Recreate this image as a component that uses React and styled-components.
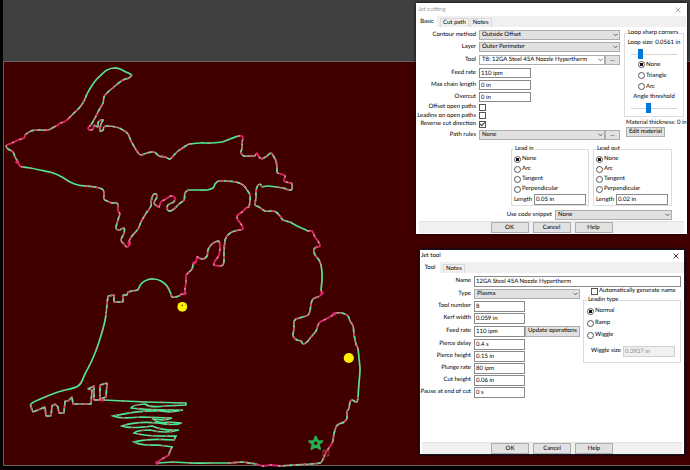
import React, { useId } from "react";
import styled, { createGlobalStyle } from "styled-components";

const GlobalStyle = createGlobalStyle`
  *, *::before, *::after { box-sizing: border-box; }
  body { margin: 0; background: #000; }
  body, button, input, select {
    font-family: Lato, "Liberation Sans", sans-serif;
    font-size: 6px;
    line-height: 8px;
    color: #000;
    text-rendering: geometricPrecision;
  }
`;

/* ---------- workspace ---------- */

const Workspace = styled.main`
  position: relative;
  display: flex;
  flex-direction: column;
  min-height: 100vh;
  overflow: hidden;
  background: #000;
`;

const Margin = styled.div`
  height: 61px;
  margin-left: 3px;
  background: #404040;
`;

const Sheet = styled.section`
  display: flex;
  flex: 1;
  margin: 0 0 4px 3px;
  background: #400000;
  border: solid #6b5f5f;
  border-width: 1px 0 1px 1px;
`;

const Drawing = styled.svg`
  flex: 1;
  min-width: 0;
  overflow: visible;
`;

/* ---------- windows ---------- */

const Dialog = styled.section`
  position: absolute;
  top: ${(p) => p.$top}px;
  right: ${(p) => p.$right}px;
  width: ${(p) => p.$width}px;
  max-width: 100vw;
  display: flex;
  flex-direction: column;
  background: #fff;
  border: 1px solid ${(p) => (p.$active ? "#14142c" : "#fff")};
  box-shadow: 0 0 3px #000;
`;

const TitleBar = styled.header`
  display: flex;
  align-items: center;
  justify-content: space-between;
  height: 12px;
  padding: 0 5px 0 1px;
  color: ${(p) => (p.$active ? "#000" : "#999")};
`;

const Title = styled.h2`
  margin: 0;
  font-size: 6px;
  line-height: 8px;
  font-weight: 400;
`;

const CloseButton = styled.button`
  display: flex;
  padding: 0;
  border: 0;
  background: none;
  color: inherit;
`;

const TabBar = styled.div`
  display: flex;
  align-items: flex-end;
  gap: 1px;
  height: 11px;
  background: #f0f0f0;
`;

const Tab = styled.button`
  height: ${(p) => (p.$active ? 11 : 9)}px;
  padding: 0 2px;
  margin-right: ${(p) => (p.$active ? 2 : 0)}px;
  border: solid #d9d9d9;
  border-width: ${(p) => (p.$active ? "0" : "1px 1px 0")};
  background: ${(p) => (p.$active ? "#fff" : "#f0f0f0")};
  min-width: 20px;
`;

const Footer = styled.footer`
  display: flex;
  justify-content: center;
  align-items: flex-end;
  gap: 4px;
  height: 12px;
  margin: 0 2px;
  background: #f0f0f0;
  border-top: 1px solid #e4e4e4;
`;

const Button = styled.button`
  height: ${(p) => p.$height || 11}px;
  width: ${(p) => (p.$width ? `${p.$width}px` : "auto")};
  flex: none;
  padding: 0;
  display: flex;
  align-items: center;
  justify-content: center;
  white-space: nowrap;
  background: #e1e1e1;
  border: 1px solid #adadad;
`;

/* ---------- form parts ---------- */

const JetBody = styled.div`
  display: grid;
  grid-template-columns: 1fr 60px;
  column-gap: 4px;
  padding: 2px 2px 0 0;
`;

const Fields = styled.div`
  display: flex;
  flex-direction: column;
`;

const Row = styled.div`
  display: grid;
  grid-template-columns: ${(p) => p.$label}px 1fr;
  align-items: center;
  height: ${(p) => p.$height || 12}px;
`;

const Label = styled.label`
  padding-right: 3px;
  text-align: right;
  white-space: nowrap;
`;

const Controls = styled.div`
  display: flex;
  align-items: center;
  min-width: 0;
`;

const TextInput = styled.input`
  width: ${(p) => (p.$width ? `${p.$width}px` : "100%")};
  height: ${(p) => p.$height || 10}px;
  min-width: 0;
  padding: 0 1px;
  border: 1px solid #8a8a8a;
  border-radius: 0;
  background: #fff;
  &:disabled {
    color: #8a8a8a;
    background: #f0f0f0;
    border-color: #d0d0d0;
  }
`;

const SelectBox = styled.span`
  position: relative;
  display: flex;
  align-items: center;
  flex: 1;
  min-width: 0;
`;

const NativeSelect = styled.select`
  appearance: none;
  width: 100%;
  height: 10px;
  padding: 0 10px 0 2px;
  border: 1px solid #adadad;
  border-radius: 0;
  background: ${(p) => (p.$plain ? "#fff" : "#e1e1e1")};
`;

const Chevron = styled.svg`
  position: absolute;
  right: 2px;
  pointer-events: none;
`;

const Check = styled.input`
  appearance: none;
  flex: none;
  width: 7px;
  height: 7px;
  margin: 0;
  border: 1px solid #555;
  background: #fff;
  &:checked::after {
    content: "";
    display: block;
    width: 5px;
    height: 3px;
    border: solid #333;
    border-width: 0 0 1px 1px;
    transform: rotate(-45deg);
  }
`;

const CheckLabel = styled.label`
  display: flex;
  align-items: center;
  gap: 1px;
  white-space: nowrap;
`;

const Radio = styled.input`
  appearance: none;
  flex: none;
  width: 7px;
  height: 7px;
  margin: 0;
  border: 1px solid #555;
  border-radius: 50%;
  background: #fff;
  &:checked {
    background: radial-gradient(circle, #111 0 1.5px, #fff 2px);
  }
`;

const RadioLabel = styled.label`
  display: flex;
  align-items: center;
  gap: 1px;
  height: ${(p) => p.$height || 10}px;
  white-space: nowrap;
`;

const Group = styled.fieldset`
  display: flex;
  flex-direction: column;
  min-width: 0;
  margin: 0;
  padding: ${(p) => p.$padding || "1px 2px 0"};
  border: 1px solid #dcdcdc;
`;

const Legend = styled.legend`
  margin: 0;
  padding: 0 1px;
  white-space: nowrap;
`;

const LengthRow = styled.div`
  display: grid;
  grid-template-columns: 20px 1fr;
  align-items: center;
  height: 11px;
  white-space: nowrap;
`;

const LeadGroups = styled.div`
  display: grid;
  grid-template-columns: 78px 79px;
  gap: 4px;
  margin: 3px 14px 0 0;
  justify-content: end;
`;

const Snippet = styled.div`
  display: grid;
  grid-template-columns: 1fr 117px;
  align-items: center;
  height: 10px;
  margin: 4px 14px 1px 0;
`;

const Side = styled.div`
  display: flex;
  flex-direction: column;
`;

const Caption = styled.label`
  height: 10px;
  text-align: center;
  white-space: nowrap;
`;

const RadioStack = styled.div`
  display: flex;
  flex-direction: column;
  padding: 0 0 1px 11px;
`;

const Slider = styled.input`
  appearance: none;
  width: 46px;
  height: 10px;
  margin: 0 auto;
  background: linear-gradient(#d6d6d6, #d6d6d6) center / 100% 1px no-repeat;
  &::-webkit-slider-thumb {
    appearance: none;
    width: 5px;
    height: 10px;
    background: #0078d7;
  }
`;

const Material = styled.div`
  display: flex;
  flex-direction: column;
  align-items: flex-start;
  padding: 2px 0 0 2px;
  white-space: nowrap;
`;

const ToolBody = styled.div`
  padding: 2px 3px 0 0;
  min-height: 169px;
`;

const ToolColumns = styled.div`
  display: grid;
  grid-template-columns: 160px 1fr;
  column-gap: 3px;
`;

const LeadinColumn = styled.div`
  display: flex;
  flex-direction: column;
  gap: 1px;
`;

const AutoName = styled.div`
  padding-left: 8px;
`;

const WiggleRow = styled.div`
  display: grid;
  grid-template-columns: 32px 52px;
  align-items: center;
  height: 20px;
  padding-left: 4px;
  white-space: nowrap;
`;

function Cross() {
  return (
    <svg width="6" height="6" viewBox="0 0 6 6" aria-hidden="true">
      <path d="M.5 .5 5.5 5.5M5.5 .5 .5 5.5" stroke="currentColor" strokeWidth=".8" />
    </svg>
  );
}

function Select({ id, value, plain }) {
  return (
    <SelectBox>
      <NativeSelect id={id} $plain={plain} defaultValue={value}>
        <option>{value}</option>
      </NativeSelect>
      <Chevron width="5" height="4" viewBox="0 0 5 4" aria-hidden="true">
        <path d="M.5 .8 2.5 2.8 4.5 .8" fill="none" stroke="#444" strokeWidth=".8" />
      </Chevron>
    </SelectBox>
  );
}

function Field({ label, labelWidth, height, children }) {
  const id = useId();
  return (
    <Row $label={labelWidth} $height={height}>
      <Label htmlFor={id}>{label}</Label>
      <Controls>{children(id)}</Controls>
    </Row>
  );
}

function Radios({ name, options, height }) {
  return options.map((option, i) => (
    <RadioLabel key={option} $height={height}>
      <Radio type="radio" name={name} defaultChecked={i === 0} />
      {option}
    </RadioLabel>
  ));
}

function LeadGroup({ title, length }) {
  const id = useId();
  return (
    <Group>
      <Legend>{title}</Legend>
      <Radios name={title} options={["None", "Arc", "Tangent", "Perpendicular"]} />
      <LengthRow>
        <label htmlFor={id}>Length</label>
        <TextInput id={id} defaultValue={length} $width={52} $height={11} />
      </LengthRow>
    </Group>
  );
}

function Window({ title, active, tabs, children, ...place }) {
  return (
    <Dialog role="dialog" aria-label={title} $active={active} {...place}>
      <TitleBar $active={active}>
        <Title>{title}</Title>
        <CloseButton aria-label="Close">
          <Cross />
        </CloseButton>
      </TitleBar>
      <TabBar role="tablist">
        {tabs.map((tab, i) => (
          <Tab key={tab} role="tab" aria-selected={i === 0} $active={i === 0}>
            {tab}
          </Tab>
        ))}
      </TabBar>
      {children}
      <Footer>
        <Button $width={38}>OK</Button>
        <Button $width={38}>Cancel</Button>
        <Button $width={38}>Help</Button>
      </Footer>
    </Dialog>
  );
}

function JetCutting() {
  const w = 62;
  return (
    <Window title="Jet cutting" tabs={["Basic", "Cut path", "Notes"]} $top={3} $right={3} $width={271}>
      <JetBody>
        <Fields>
          <Field label="Contour method" labelWidth={w}>{(id) => <Select id={id} value="Outside Offset" />}</Field>
          <Field label="Layer" labelWidth={w}>{(id) => <Select id={id} value="Outer Perimeter" />}</Field>
          <Field label="Tool" labelWidth={w} height={14}>
            {(id) => (
              <>
                <Select id={id} plain value="T8: 12GA Steel 45A Nozzle Hypertherm" />
                <Button $width={15} $height={10} aria-label="Browse tools">...</Button>
              </>
            )}
          </Field>
          <Field label="Feed rate" labelWidth={w}>{(id) => <TextInput id={id} $width={52} defaultValue="110 ipm" />}</Field>
          <Field label="Max chain length" labelWidth={w}>{(id) => <TextInput id={id} $width={52} defaultValue="0 in" />}</Field>
          <Field label="Overcut" labelWidth={w}>{(id) => <TextInput id={id} $width={52} defaultValue="0 in" />}</Field>
          <Field label="Offset open paths" labelWidth={w} height={8}>{(id) => <Check id={id} type="checkbox" />}</Field>
          <Field label="Leadins on open paths" labelWidth={w} height={9}>{(id) => <Check id={id} type="checkbox" />}</Field>
          <Field label="Reverse cut direction" labelWidth={w} height={8}>{(id) => <Check id={id} type="checkbox" defaultChecked />}</Field>
          <Field label="Path rules" labelWidth={w} height={14}>
            {(id) => (
              <>
                <Select id={id} value="None" />
                <Button $width={15} $height={10} aria-label="Edit path rules">...</Button>
              </>
            )}
          </Field>
        </Fields>
        <Side>
          <Group $padding="2px 2px 3px">
            <Legend>Loop sharp corners</Legend>
            <Caption htmlFor="loop">Loop size: 0.0561 in</Caption>
            <Slider id="loop" type="range" defaultValue="18" />
            <RadioStack>
              <Radios name="loop-shape" height={11} options={["None", "Triangle", "Arc"]} />
            </RadioStack>
            <Caption htmlFor="angle">Angle threshold</Caption>
            <Slider id="angle" type="range" defaultValue="37" />
          </Group>
          <Material>
            <span>Material thickness: 0 in</span>
            <Button $width={39} $height={10}>Edit material</Button>
          </Material>
        </Side>
      </JetBody>
      <LeadGroups>
        <LeadGroup title="Lead in" length="0.05 in" />
        <LeadGroup title="Lead out" length="0.02 in" />
      </LeadGroups>
      <Snippet>
        <Label htmlFor="snippet">Use code snippet</Label>
        <Select id="snippet" value="None" />
      </Snippet>
    </Window>
  );
}

function JetTool() {
  const w = 54;
  const text = (label, value) => (
    <Field key={label} label={label} labelWidth={w}>
      {(id) => <TextInput id={id} $width={51} $height={11} defaultValue={value} />}
    </Field>
  );
  return (
    <Window title="Jet tool" active tabs={["Tool", "Notes"]} $top={249} $right={5} $width={266}>
      <ToolBody>
        <Field label="Name" labelWidth={w} height={12}>
          {(id) => <TextInput id={id} $height={11} defaultValue="12GA Steel 45A Nozzle Hypertherm" />}
        </Field>
        <ToolColumns>
          <div>
            <Field label="Type" labelWidth={w} height={13}>{(id) => <Select id={id} value="Plasma" />}</Field>
            {text("Tool number", "8")}
            {text("Kerf width", "0.059 in")}
            <Field label="Feed rate" labelWidth={w} height={14}>
              {(id) => (
                <>
                  <TextInput id={id} $width={51} $height={11} defaultValue="110 ipm" />
                  <Button $width={55}>Update operations</Button>
                </>
              )}
            </Field>
            {text("Pierce delay", "0.4 s")}
            {text("Pierce height", "0.15 in")}
            {text("Plunge rate", "80 ipm")}
            {text("Cut height", "0.06 in")}
            {text("Pause at end of cut", "0 s")}
          </div>
          <LeadinColumn>
            <AutoName>
              <CheckLabel>
                <Check type="checkbox" />
                Automatically generate name
              </CheckLabel>
            </AutoName>
            <Group $padding="1px 3px">
              <Legend>Leadin type</Legend>
              <Radios name="leadin" height={12} options={["Normal", "Ramp", "Wiggle"]} />
              <WiggleRow>
                <label htmlFor="wiggle">Wiggle size</label>
                <TextInput id="wiggle" disabled $height={11} defaultValue="0.3937 in" />
              </WiggleRow>
            </Group>
          </LeadinColumn>
        </ToolColumns>
      </ToolBody>
    </Window>
  );
}

/* ---------- tool path ---------- */

/* Runs of the contour: long cuts are "cut", dense nodes are "node", the rest "mixed". */
const runs = [
  ["node", "6,147 7,145 12,143 18,140 24,138 25,135"],
  ["mixed", "25,135 31,131 39,130 48,130 54,127"],
  ["node", "54,127 58,125 60,123 64,122 68,119"],
  ["mixed", "68,119 74,113 80,107 84,101 87,94"],
  ["cut", "87,94 91,87 96,80 101,75 107,70 114,68 120,69 126,72 132,75"],
  ["mixed", "132,75 129,78 123,80 115,86 107,93 104,97 103,103 99,110 95,118 91,125"],
  ["node", "91,125 88,128 90,130 93,129 94,125"],
  ["mixed", "94,125 98,127 98,124 99,121 103,120 101,124 100,131 103,130 104,127 107,126 116,127 123,130 128,134 131,141 135,148 139,154 142,155"],
  ["mixed", "142,155 147,153 154,152 159,156 165,157 170,159 174,155 178,151 184,147 189,144"],
  ["cut", "189,144 200,143 211,143 222,142 230,139 238,136"],
  ["node", "238,136 242,136 243,138 242,142"],
  ["mixed", "242,142 242,148 241,153 244,156 250,156 255,156"],
  ["node", "255,156 257,153 259,157 262,159"],
  ["mixed", "262,159 267,156 271,153 274,157 276,161 277,167 277,173"],
  ["node", "277,173 281,174 285,176 284,181 290,183"],
  ["mixed", "290,183 292,184 291,190 283,188 277,187"],
  ["cut", "277,187 268,186 262,187"],
  ["mixed", "262,187 260,184 257,187 256,192 256,198 255,205 259,207 265,211 272,211 276,212 280,216 283,220 290,222"],
  ["cut", "290,222 297,226 304,229 308,231"],
  ["node", "308,231 312,231 315,237 318,241 320,246 317,247"],
  ["mixed", "317,247 314,249 315,255 319,260 321,265"],
  ["cut", "321,265 322,272 322,280 321,290"],
  ["node", "321,290 322,294 318,297"],
  ["mixed", "318,297 313,299 311,304 310,311 308,315 303,317 296,319 294,322 294,329 293,336 297,340 301,341 303,344 307,342 311,337 316,331 318,325"],
  ["node", "318,325 320,322 326,319 333,315 335,313"],
  ["mixed", "335,313 342,313 348,316 350,321 353,326 354,334 356,344 358,348"],
  ["cut", "358,348 359,358 360,370 359,383 358,397"],
  ["mixed", "358,397 357,402 354,401 352,400 350,402 349,408 347,412 347,418 344,422 339,424 336,427 334,434 333,441"],
  ["node", "333,441 331,445 326,452 324,457"],
  ["mixed", "324,457 322,461 320,463 310,464 295,465 280,466"],
  ["node", "280,466 270,465 263,466 257,464"],
  ["mixed", "257,464 249,463 242,462 230,463"],
  ["cut", "230,463 210,463 190,463 174,462 158,463"],
  ["node", "156,463 162,459 169,455"],
  ["mixed", "169,455 170,451 172,447"],
  ["cut", "31,407 31,404 38,400 58,392 78,386 85,374 93,358 99,342 104,325 106,315"],
  ["mixed", "171,294 172,297 175,297 179,296 181,294"],
  ["cut", "138,290 141,284 147,280 154,279 161,281 167,286 171,294"],
  ["node", "181,294 185,294 185,288 186,283 186,276 188,273"],
  ["mixed", "188,273 192,269 193,264"],
  ["node", "193,264 196,262 197,257 199,258"],
  ["mixed", "199,258 203,259 207,256 208,250 211,245 215,242 219,241"],
  ["node", "219,241 220,246 219,255 215,261 214,265 219,266"],
  ["mixed", "219,266 223,265 224,260 224,252 225,241 227,236 232,232 239,230"],
  ["node", "239,230 243,229 241,224 238,220 237,216 242,212 246,208 249,207"],
  ["mixed", "249,207 250,201 250,195 247,190 243,185 236,182 227,181 218,181"],
  ["cut", "218,181 215,184 213,188 207,190 198,190 188,190"],
  ["mixed", "188,190 185,193 184,200 179,204 174,209 170,211 167,209 168,205 174,202"],
  ["node", "174,202 175,198 171,196 166,199 161,202 159,207 157,206"],
  ["mixed", "157,206 154,203 157,197 156,194 153,195 151,202 151,206 145,215 141,222 138,229 132,236 129,241"],
  ["node", "129,241 130,244 127,247 124,244"],
  ["mixed", "124,244 121,240 124,233 124,228 119,230 116,228 118,220 120,214"],
  ["node", "120,214 118,210 118,207"],
  ["mixed", "118,207 117,203 112,203 107,201 104,199 104,192 102,189 95,187 86,186"],
  ["cut", "86,186 78,185 70,182 62,177 53,173 40,170 30,168 23,167"],
  ["node", "23,167 20,166 18,162"],
  ["mixed", "18,162 15,157 13,152 8,149 6,147"],
];

const straightRuns = [
  ["mixed", "106,315 107,304 108,296 114,295 114,302 123,302 123,295 127,295 128,292 132,291 138,290"],
  ["mixed", "31,407 33,412 38,410 45,407 46,416 51,416 52,406 55,404 58,407 59,413 64,413 65,401 68,401 72,397 73,404 91,404 92,390 88,389 94,386 94,400 100,400 100,385 107,383 106,397 100,399 103,400"],
  ["cut", "103,400 146,402 186,403 186,405 165,406"],
];

const wavePath =
  "M165 406Q150 408 145 404 Q132 405 131 408 Q145 410 183 410 Q172 413 160 411 " +
  "Q140 410 113 416 Q120 419 142 417 L172 418 Q164 421 153 419 Q158 424 168 422 L182 423 " +
  "Q174 426 158 423 Q136 421 122 426 Q130 429 152 426 Q163 431 179 430 Q165 434 150 430 " +
  "Q137 430 134 433 Q150 437 176 436 L174 440 Q148 438 134 442 Q142 446 158 445 L173 447";

function smooth(list) {
  const pts = list.split(" ").map((p) => p.split(",").map(Number));
  let d = `M${pts[0]}`;
  for (let i = 0; i < pts.length - 1; i++) {
    const a = pts[i - 1] || pts[i];
    const b = pts[i];
    const c = pts[i + 1];
    const e = pts[i + 2] || c;
    d += `C${b[0] + (c[0] - a[0]) / 6},${b[1] + (c[1] - a[1]) / 6} ${c[0] - (e[0] - b[0]) / 6},${c[1] - (e[1] - b[1]) / 6} ${c}`;
  }
  return d;
}

const strokes = {
  cut: [["#4ce890", 1.7, "none"], ["#c98a8c", 1.5, "2 17"]],
  node: [["#e0246a", 1.8, "none"], ["#c4a698", 1.4, "2 6"]],
  mixed: [["#bb978a", 1.6, "none"], ["#56e294", 1.6, "3 4"], ["#e02c70", 1.7, "2 9"]],
};

function Run({ tone, d }) {
  return strokes[tone].map(([stroke, width, dash]) => (
    <path key={stroke} d={d} stroke={stroke} strokeWidth={width} strokeDasharray={dash} fill="none" strokeLinejoin="round" />
  ));
}

function ToolPath() {
  return (
    <Drawing viewBox="4 62 686 403" preserveAspectRatio="xMinYMin meet" role="img" aria-label="Michigan outline tool path">
      {runs.map(([tone, pts]) => <Run key={pts} tone={tone} d={smooth(pts)} />)}
      {straightRuns.map(([tone, pts]) => <Run key={pts} tone={tone} d={`M${pts.split(" ").join("L")}`} />)}
      <path d={wavePath} stroke="#4ce890" strokeWidth="1.7" fill="none" />
      <path d={wavePath} stroke="#d0406f" strokeWidth="1.4" strokeDasharray="2 12" fill="none" />
      {[[17, 162], [129, 243], [185, 293], [334, 314], [194, 263], [102, 400], [157, 463], [322, 293]].map(([x, y]) => (
        <circle key={x} cx={x} cy={y} r="1.7" fill="#e8246c" />
      ))}
      <path d="M323 450 329 456M329 450 323 456M323 450h6v6h-6z" stroke="#b4574f" strokeWidth=".6" fill="none" />
      <circle cx="182.3" cy="306.8" r="4.9" fill="#fff200" />
      <circle cx="182.2" cy="305.4" r=".8" fill="#6b5a10" />
      <circle cx="348.8" cy="358" r="5.1" fill="#fff200" />
      <path
        d="M315.7 436.500 317.600 440.900 322.300 441.200 318.700 444.300 320 449 315.700 446.400 311.500 449 312.700 444.300 309.200 441.200 313.900 440.900Z"
        fill="#22b14c"
        stroke="#22b14c"
        strokeWidth="2"
        strokeLinejoin="round"
      />
      <circle cx="315.7" cy="443.2" r="1.7" fill="#400000" />
    </Drawing>
  );
}

export default function App() {
  return (
    <>
      <GlobalStyle />
      <Workspace>
        <Margin />
        <Sheet>
          <ToolPath />
        </Sheet>
        <JetCutting />
        <JetTool />
      </Workspace>
    </>
  );
}
